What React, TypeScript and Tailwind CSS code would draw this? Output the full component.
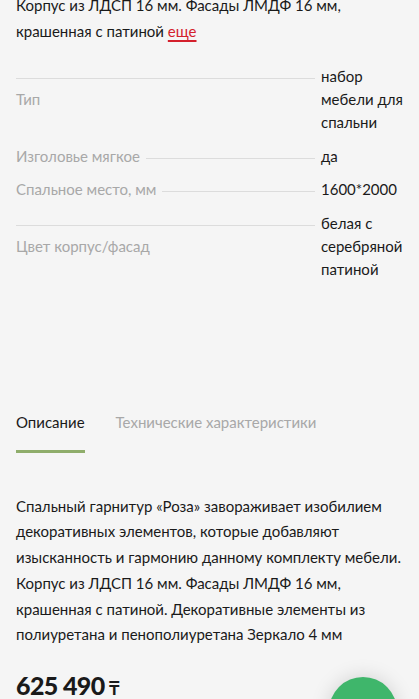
const specs = [
  { label: 'Тип', value: ['набор', 'мебели для', 'спальни'] },
  { label: 'Изголовье мягкое', value: ['да'] },
  { label: 'Спальное место, мм', value: ['1600*2000'] },
  { label: 'Цвет корпус/фасад', value: ['белая с', 'серебряной', 'патиной'] },
];

function SpecRow({ label, value }: { label: string; value: string[] }) {
  return (
    <div className="flex leading-[23px]">
      <div className="grid flex-1">
        <div className="col-start-1 row-start-1 self-start mt-[13px] h-px bg-[#dcdcdc]" />
        <span className="col-start-1 row-start-1 self-center justify-self-start bg-[#f5f5f5] pr-1.5 text-[#a8a8a8]">
          {label}
        </span>
      </div>
      <div className="w-[82px] ml-1.5 text-[#1a1a1a]">
        {value.map((line) => (
          <div key={line}>{line}</div>
        ))}
      </div>
    </div>
  );
}

export default function App() {
  return (
    <div
      className="relative h-[699px] overflow-hidden bg-[#f5f5f5] text-[15px] text-[#1a1a1a]"
      style={{ fontFamily: 'Lato, "Noto Sans", sans-serif' }}
    >
      <div className="px-4 -mt-[8px] leading-[26px]">
        <p>
          Корпус из ЛДСП 16 мм. Фасады ЛМДФ 16 мм,
          <br />
          крашенная с патиной{' '}
          <a className="text-[#d4202c] underline decoration-[1.5px] underline-offset-[3px]">еще</a>
        </p>
      </div>

      <div className="px-4 mt-[21px] flex flex-col gap-[10.5px]">
        {specs.map((s) => (
          <SpecRow key={s.label} label={s.label} value={s.value} />
        ))}
      </div>

      <div className="px-4 mt-[131px] flex gap-[31px]">
        <div className="flex flex-col">
          <span className="leading-[20px]">Описание</span>
          <div className="mt-[18px] h-[3px] bg-[#8fad6b]" />
        </div>
        <span className="leading-[20px] text-[#a8a8a8]">Технические характеристики</span>
      </div>

      <p className="px-4 mt-[41px] leading-[25.8px]">
        Спальный гарнитур «Роза» завораживает изобилием декоративных элементов, которые добавляют
        изысканность и гармонию данному комплекту мебели. Корпус из ЛДСП 16 мм. Фасады ЛМДФ 16 мм,
        крашенная с патиной. Декоративные элементы из полиуретана и пенополиуретана Зеркало 4 мм
      </p>

      <div className="px-4 mt-[22px] flex items-baseline gap-1">
        <span className="text-[25px] leading-[30px] font-black tracking-tight">625 490</span>
        <span className="text-[18px] font-bold">₸</span>
      </div>

      <div className="absolute left-[329px] top-[677px] size-[68px] rounded-full bg-[#3fb66b] shadow-[0_0_20px_rgba(0,0,0,0.15)]" />
    </div>
  );
}
